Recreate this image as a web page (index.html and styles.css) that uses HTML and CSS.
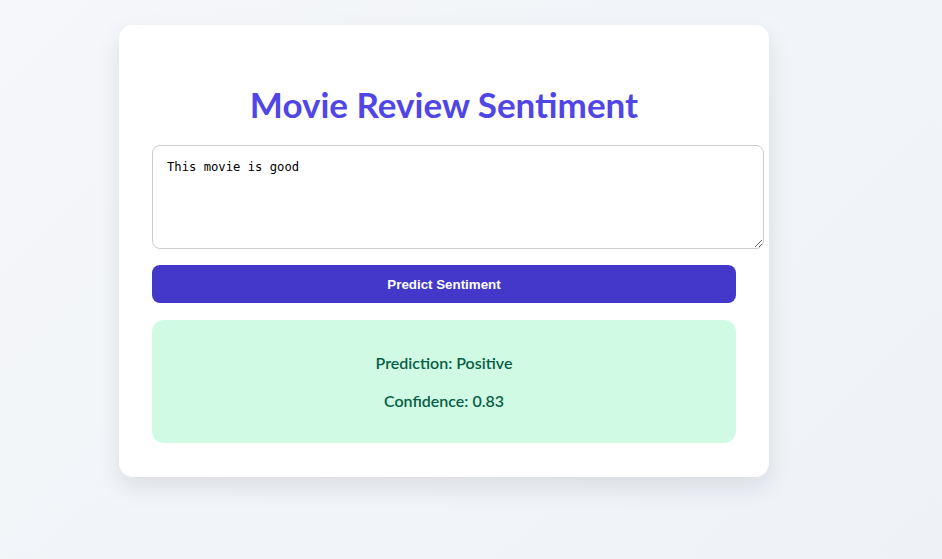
FILE: index.html
```html
<!DOCTYPE html>
<html lang="en">
<head>
<meta charset="utf-8">
<title>Movie Review Sentiment</title>
<link rel="stylesheet" href="styles.css">
</head>
<body>
<main class="card">
  <h1 class="title">Movie Review Sentiment</h1>
  <textarea class="review">This movie is good</textarea>
  <button class="predict">Predict Sentiment</button>
  <section class="result">
    <p class="result-line">Prediction: Positive</p>
    <p class="result-line">Confidence: 0.83</p>
  </section>
</main>
</body>
</html>
```
FILE: styles.css
```css
html, body {
  margin: 0;
  height: 100%;
}
body {
  background: linear-gradient(135deg, #f5f7fa 0%, #eef2f7 100%);
  font-family: Lato, "Open Sans", sans-serif;
  padding-top: 25px;
  box-sizing: border-box;
}
.card {
  margin-left: 119px;
  width: 650px;
  box-sizing: border-box;
  padding: 33px 33px 34px;
  background: #fff;
  border-radius: 14px;
  box-shadow: 0 10px 25px rgba(15, 23, 42, 0.10);
  display: flex;
  flex-direction: column;
}
.title {
  margin: 26px 0 21px;
  font-size: 35px;
  line-height: 40px;
  font-weight: 700;
  color: #4f46e5;
  text-align: center;
}
.review {
  width: 612px;
  height: 104px;
  box-sizing: border-box;
  padding: 13px 14px;
  border: 1px solid #cccccc;
  border-radius: 8px;
  font-family: "DejaVu Sans Mono", "Liberation Mono", monospace;
  font-size: 12.2px;
  line-height: 16px;
  color: #000;
  background: #fff;
}
.predict {
  margin-top: 16px;
  height: 38px;
  border: none;
  border-radius: 8px;
  background: #4338ca;
  color: #fff;
  font-family: "Liberation Sans", Arial, sans-serif;
  font-weight: 700;
  font-size: 13.33px;
}
.result {
  margin-top: 17px;
  padding: 16px 0 15px;
  background: #d1fae5;
  border-radius: 12px;
  text-align: center;
  color: #065f46;
}
.result-line {
  margin: 16px 0;
  font-size: 16px;
  line-height: 22px;
  font-weight: 600;
}
```
